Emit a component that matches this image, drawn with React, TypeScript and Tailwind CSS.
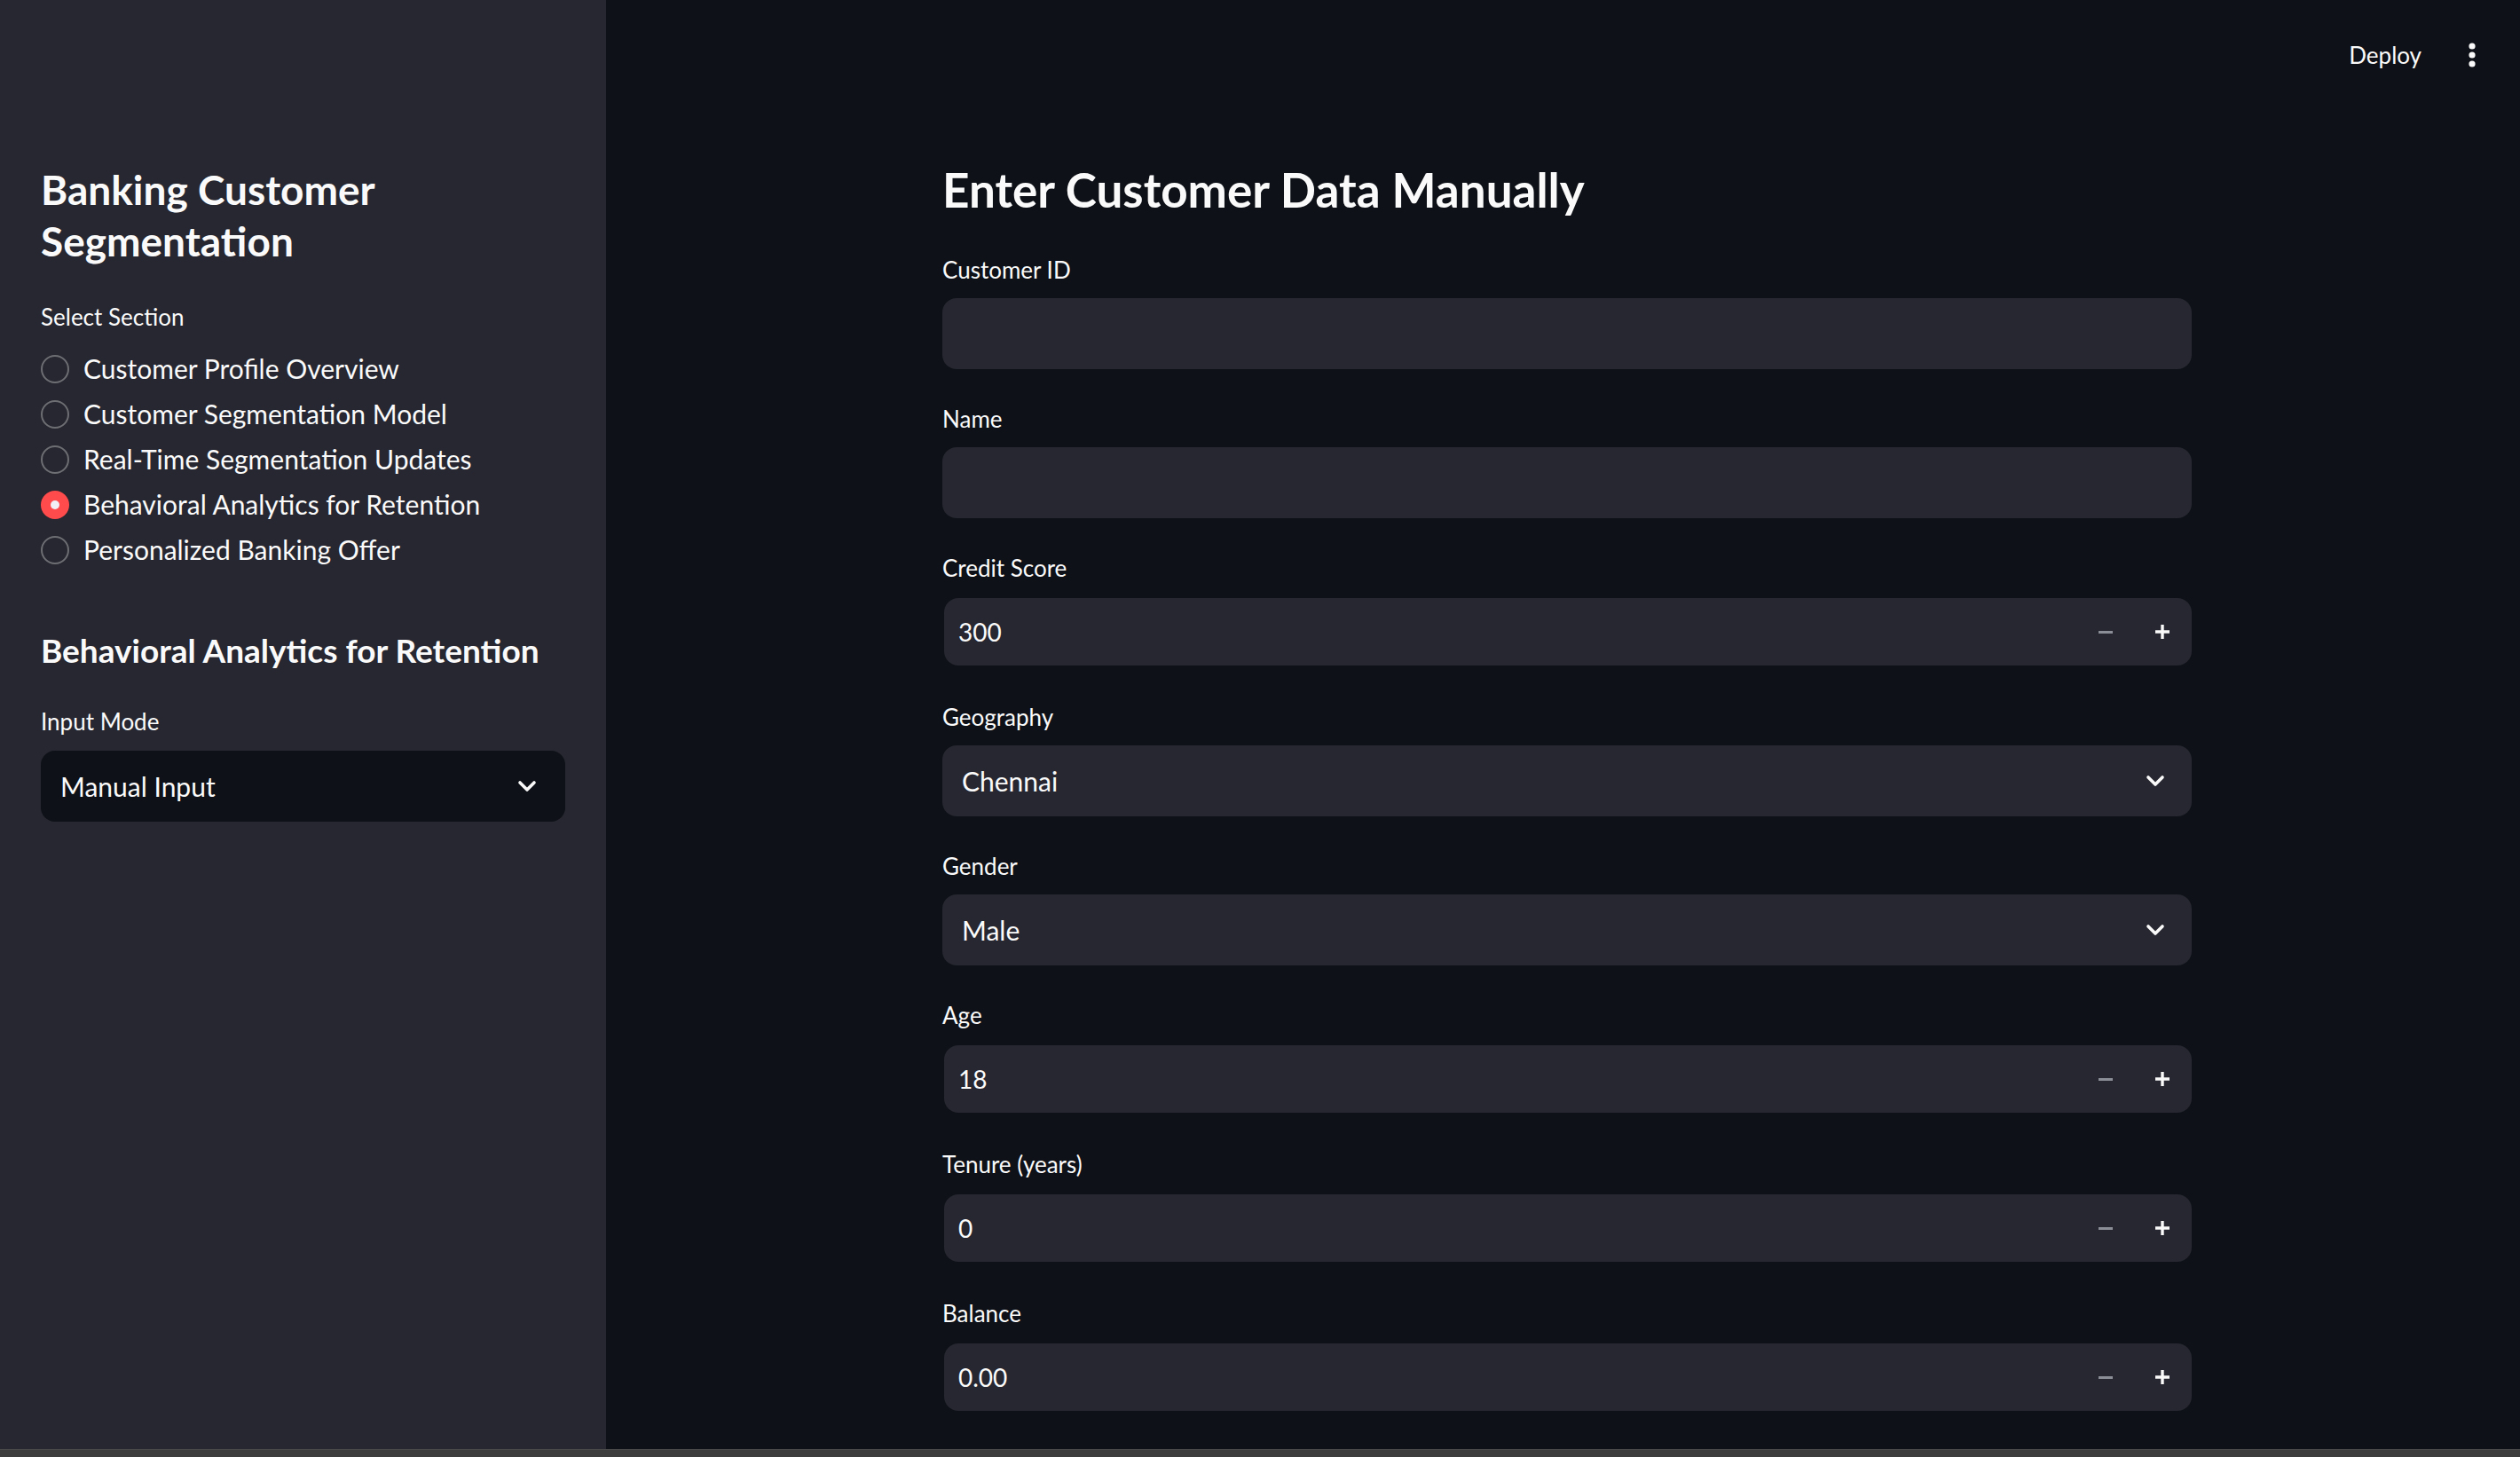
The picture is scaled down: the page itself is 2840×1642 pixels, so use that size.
import React from 'react'

const font = { fontFamily: 'Lato, "Source Sans Pro", "Noto Sans", sans-serif' }

const sections = [
  'Customer Profile Overview',
  'Customer Segmentation Model',
  'Real-Time Segmentation Updates',
  'Behavioral Analytics for Retention',
  'Personalized Banking Offer',
]

function Chevron() {
  return (
    <svg width="22" height="14" viewBox="0 0 22 14" fill="none">
      <path d="M3 3 L11 11 L19 3" stroke="#fafafa" strokeWidth="3.6" strokeLinecap="round" strokeLinejoin="round" />
    </svg>
  )
}

function Label({ children }: { children: React.ReactNode }) {
  return <div className="text-[26px] leading-[31px] text-[#fafafa] mt-[1px] mb-[16px]">{children}</div>
}

function TextField({ label }: { label: string }) {
  return (
    <div>
      <Label>{label}</Label>
      <div className="h-[80px] rounded-[16px] bg-[#262730]" />
    </div>
  )
}

function SelectField({ label, value }: { label: string; value: string }) {
  return (
    <div>
      <Label>{label}</Label>
      <div className="h-[80px] rounded-[16px] bg-[#262730] flex items-center pl-[22px] pr-[30px]">
        <span className="flex-1 text-[30px] text-[#fafafa]">{value}</span>
        <Chevron />
      </div>
    </div>
  )
}

function NumberField({ label, value }: { label: string; value: string }) {
  return (
    <div>
      <Label>{label}</Label>
      <div className="h-[80px] py-[2px] pl-[2px]">
        <div className="h-[76px] rounded-[16px] bg-[#262730] flex items-center pl-[16px] pr-[24px]">
          <span className="flex-1 text-[28px] text-[#fafafa]">{value}</span>
          <div className="w-[16px] h-[3px] bg-[#8b8d97] mr-[47px]" />
          <svg width="18" height="18" viewBox="0 0 18 18">
            <path d="M9 1 V17 M1 9 H17" stroke="#fafafa" strokeWidth="3.4" />
          </svg>
        </div>
      </div>
    </div>
  )
}

export default function App() {
  return (
    <div className="w-[2840px] h-[1642px] flex flex-col bg-[#0e1117] overflow-hidden" style={font}>
      <div className="flex h-[1633px]">
        {/* sidebar */}
        <aside className="w-[683px] shrink-0 bg-[#262730] px-[46px] pt-[185px] text-[#fafafa]">
          <h1 className="text-[46px] leading-[58px] font-bold">
            Banking Customer
            <br />
            Segmentation
          </h1>
          <div className="mt-[41px] text-[26px] leading-[31px]">Select Section</div>
          <div className="mt-[17px] flex flex-col">
            {sections.map((s) => {
              const active = s === 'Behavioral Analytics for Retention'
              return (
                <div key={s} className="h-[51px] flex items-center gap-[16px]">
                  {active ? (
                    <div className="w-[32px] h-[32px] rounded-full bg-[#ff4b4b] flex items-center justify-center">
                      <div className="w-[10px] h-[10px] rounded-full bg-[#f0f0f5]" />
                    </div>
                  ) : (
                    <div className="w-[32px] h-[32px] rounded-full border-[2px] border-[#6d6e73]" />
                  )}
                  <span className="text-[30px]">{s}</span>
                </div>
              )
            })}
          </div>
          <h2 className="mt-[66px] text-[37px] leading-[44px] font-bold">Behavioral Analytics for Retention</h2>
          <div className="mt-[43px] text-[26px] leading-[31px]">Input Mode</div>
          <div className="mt-[17px] h-[80px] rounded-[16px] bg-[#0e1117] flex items-center pl-[22px] pr-[32px]">
            <span className="flex-1 text-[30px]">Manual Input</span>
            <Chevron />
          </div>
        </aside>

        {/* main */}
        <main className="flex-1 flex flex-col">
          <header className="h-[124px] flex items-center justify-end pr-[50px]">
            <span className="text-[26px] text-[#fafafa]">Deploy</span>
            <svg className="ml-[53px]" width="8" height="28" viewBox="0 0 8 28">
              <circle cx="4" cy="4" r="3.6" fill="#fafafa" />
              <circle cx="4" cy="14" r="3.6" fill="#fafafa" />
              <circle cx="4" cy="24" r="3.6" fill="#fafafa" />
            </svg>
          </header>
          <div className="pl-[9px]">
            <div className="mx-auto w-[1408px] pt-[59px] flex flex-col">
              <h3 className="text-[53px] leading-[62px] font-bold text-[#fafafa] mb-[43px]">
                Enter Customer Data Manually
              </h3>
              <div className="flex flex-col gap-[40px]">
                <TextField label="Customer ID" />
                <TextField label="Name" />
                <NumberField label="Credit Score" value="300" />
                <SelectField label="Geography" value="Chennai" />
                <SelectField label="Gender" value="Male" />
                <NumberField label="Age" value="18" />
                <NumberField label="Tenure (years)" value="0" />
                <NumberField label="Balance" value="0.00" />
              </div>
            </div>
          </div>
        </main>
      </div>
      <div className="h-[9px] bg-[#3d3d3d] border-t border-[#4a4a4a]" />
    </div>
  )
}
